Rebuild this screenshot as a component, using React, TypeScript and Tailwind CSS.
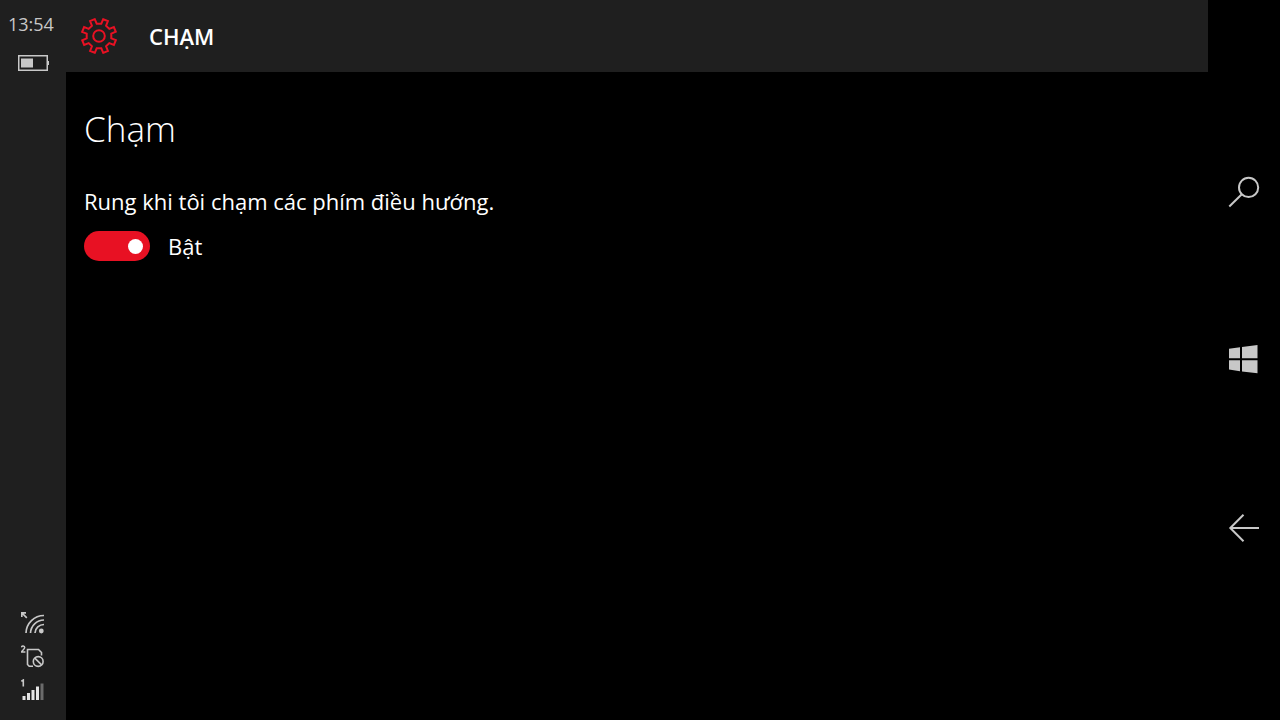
import { useState } from "react";

// One eighth of the gear outline, rotated around the centre for the rest
const TOOTH = [
  [-2.3, -12.3],
  [2.3, -12.3],
  [4.2, -16.8],
  [8.9, -14.9],
];

const GEAR_POINTS = Array.from({ length: 8 }, (_, i) => {
  const a = (i * Math.PI) / 4;
  return TOOTH.map(([x, y]) => {
    const px = x * Math.cos(a) - y * Math.sin(a);
    const py = x * Math.sin(a) + y * Math.cos(a);
    return `${px.toFixed(2)},${py.toFixed(2)}`;
  }).join(" ");
}).join(" ");

function GearIcon() {
  return (
    <svg className="h-9 w-9 text-[#e81123]" viewBox="-18 -18 36 36" fill="none" stroke="currentColor" strokeWidth={2}>
      <polygon points={GEAR_POINTS} />
      <circle r="5.8" />
    </svg>
  );
}

function BatteryIcon() {
  return (
    <svg className="h-4 w-8" viewBox="0 0 32 16" fill="none">
      <rect x="1.75" y="0.75" width="28.5" height="14.5" stroke="currentColor" strokeWidth="1.5" />
      <rect x="4" y="3.5" width="12" height="9" fill="currentColor" />
      <rect x="30.5" y="6" width="1.5" height="4" fill="currentColor" />
    </svg>
  );
}

function WifiIcon() {
  return (
    <svg className="h-6 w-6" viewBox="0 0 24 24" fill="none" stroke="currentColor" strokeWidth={1.7}>
      <path d="M0.8 6V1.8H5M1 2l4.8 4.8" />
      <path d="M5 22A18 18 0 0 1 23 4.5M9.5 22A13.5 13.5 0 0 1 23 9M14 22A9 9 0 0 1 23 13.500" />
      <circle cx="20.3" cy="20" r="2.4" fill="currentColor" stroke="none" />
    </svg>
  );
}

function SimIcon() {
  return (
    <svg className="h-6 w-6" viewBox="0 0 24 24" fill="none" stroke="currentColor" strokeWidth={1.6}>
      <path d="M0.4 2.3C0.8 0.5 3.7 0.6 3.7 2.6 3.700 4.2 1.2 5.3 0.5 7H4.4" strokeWidth={1.5} />
      <path d="M12 21.200H8.200L6.500 19.500V4.500H17.500L20.500 7.500V10.500" />
      <circle cx="17.2" cy="16.500" r="4.900" />
      <path d="M13.800 13.100l6.800 6.800" />
    </svg>
  );
}

function SignalIcon() {
  return (
    <svg className="h-6 w-6" viewBox="0 0 24 24" fill="currentColor">
      <path d="M0.300 2.200l2-1.200v6.500" fill="none" stroke="currentColor" strokeWidth={1.6} />
      <path d="M1.500 17H4.500V21H1.500zM6 14H9V21H6zM10.500 11H13.500V21H10.500zM15 7.500H18V21H15z" fill="#e4e4e4" />
      <path d="M19.500 4.500H22.500V21H19.500z" fill="#6b6b6b" />
    </svg>
  );
}

function SearchIcon() {
  return (
    <svg className="h-8 w-8" viewBox="0 0 32 32" fill="none" stroke="currentColor" strokeWidth={2}>
      <circle cx="20.6" cy="11.4" r="9.6" />
      <path d="M13.8 18.2L1.3 30.5" />
    </svg>
  );
}

function WindowsIcon() {
  return (
    <svg className="h-8 w-8" viewBox="0 0 32 32" fill="currentColor">
      <path d="M1 4.8L12 3.2V14.3H1zM14 2.900L29.500 0.900V14.3H14zM1 16.200H12V27.200L1 25.6zM14 16.200H29.500V29.200L14 27.400z" />
    </svg>
  );
}

function BackIcon() {
  return (
    <svg className="h-8 w-8" viewBox="0 0 32 32" fill="none" stroke="currentColor" strokeWidth={2}>
      <path d="M31 16H2M15.5 2.8L2.3 16l13.2 13.2" />
    </svg>
  );
}

const NAV_KEYS = [
  { label: "Tìm kiếm", icon: <SearchIcon /> },
  { label: "Bắt đầu", icon: <WindowsIcon /> },
  { label: "Quay lại", icon: <BackIcon /> },
];

export default function App() {
  const [vibrate, setVibrate] = useState(true);

  return (
    <div className="flex min-h-screen bg-black font-['Segoe_UI','Open_Sans',sans-serif] text-white">
      {/* Status bar */}
      <aside className="flex w-[66px] shrink-0 flex-col justify-between bg-[#1f1f1f] pt-3 pb-[17px] text-[#c8c8c8]">
        <div className="flex flex-col gap-[19px]">
          <time className="pl-2 text-[18px] leading-6">13:54</time>
          <div className="flex justify-center">
            <BatteryIcon />
          </div>
        </div>
        <div className="flex flex-col items-center gap-[10px]">
          <WifiIcon />
          <SimIcon />
          <SignalIcon />
        </div>
      </aside>

      <div className="min-w-0 flex-1">
        <header className="flex h-[72px] items-center gap-8 bg-[#1f1f1f] pl-[15px]">
          <GearIcon />
          <span className="text-[22px] leading-8 font-semibold">CHẠM</span>
        </header>

        <main className="px-[18px] pt-8">
          <h1 className="text-[35px] leading-[50px] font-light">Chạm</h1>
          <label htmlFor="vibrate" className="mt-8 block text-[22px] leading-[30px]">
            Rung khi tôi chạm các phím điều hướng.
          </label>
          <div className="mt-[15px] flex items-center gap-[18px]">
            <input
              id="vibrate"
              type="checkbox"
              role="switch"
              checked={vibrate}
              onChange={(e) => setVibrate(e.target.checked)}
              className="flex h-[30px] w-[66px] cursor-pointer appearance-none items-center rounded-full bg-[#767676] px-[7px] before:h-[15px] before:w-[15px] before:rounded-full before:bg-white checked:justify-end checked:bg-[#e81123]"
            />
            <span className="text-[22px] leading-[30px]">{vibrate ? "Bật" : "Tắt"}</span>
          </div>
        </main>
      </div>

      {/* Navigation keys */}
      <nav className="flex w-[72px] shrink-0 flex-col py-27 text-[#c8c8c8]">
        {NAV_KEYS.map((key) => (
          <button key={key.label} type="button" aria-label={key.label} className="flex flex-1 items-center justify-center">
            {key.icon}
          </button>
        ))}
      </nav>
    </div>
  );
}
